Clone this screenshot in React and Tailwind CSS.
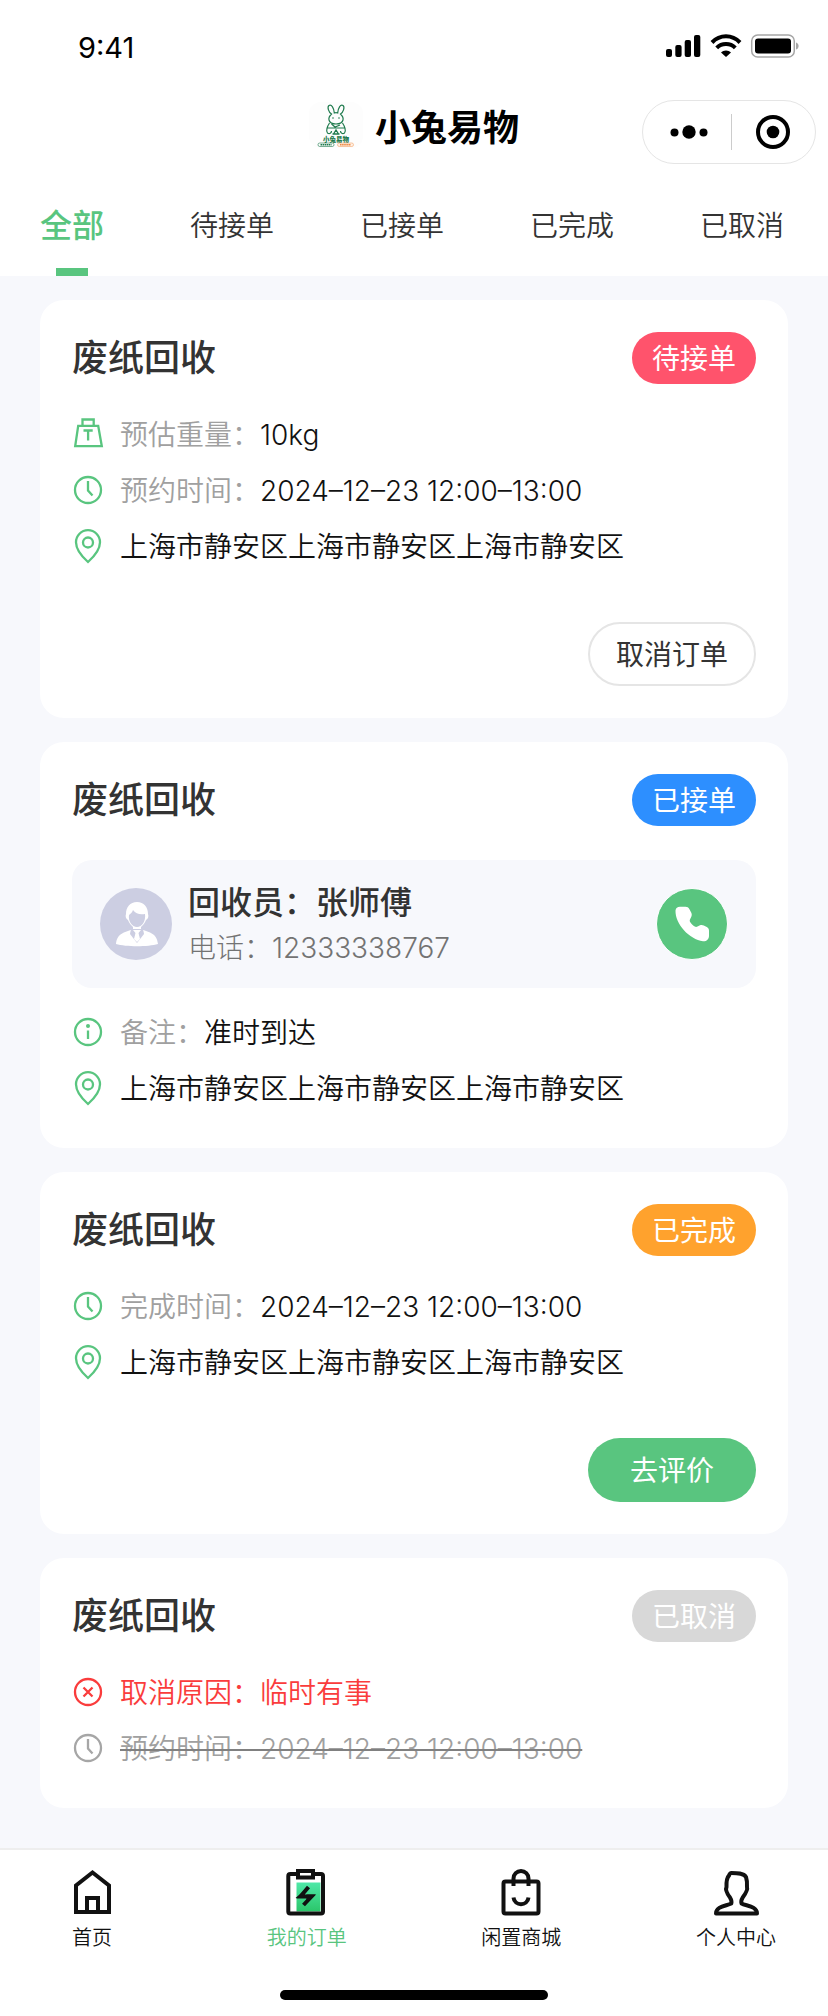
import { useState } from "react";

const tabs = ["全部", "待接单", "已接单", "已完成", "已取消"];

const ADDRESS = "上海市静安区上海市静安区上海市静安区";

const orders = [
    {
        id: 1,
        title: "废纸回收",
        status: "待接单",
        badge: "bg-[#ff536c]",
        rows: [
            { icon: "weight", label: "预估重量：", value: "10kg" },
            { icon: "clock", label: "预约时间：", value: "2024–12–23 12:00–13:00" },
            { icon: "pin", value: ADDRESS },
        ],
        action: "cancel",
    },
    {
        id: 2,
        title: "废纸回收",
        status: "已接单",
        badge: "bg-[#2d8fff]",
        collector: { name: "张师傅", phone: "12333338767" },
        rows: [
            { icon: "info", label: "备注：", value: "准时到达" },
            { icon: "pin", value: ADDRESS },
        ],
    },
    {
        id: 3,
        title: "废纸回收",
        status: "已完成",
        badge: "bg-[#ffa22d]",
        rows: [
            { icon: "clock", label: "完成时间：", value: "2024–12–23 12:00–13:00" },
            { icon: "pin", value: ADDRESS },
        ],
        action: "review",
    },
    {
        id: 4,
        title: "废纸回收",
        status: "已取消",
        badge: "bg-[#d8d8d8]",
        rows: [
            { icon: "close", label: "取消原因：", value: "临时有事", tone: "danger" },
            { icon: "clock", label: "预约时间：", value: "2024–12–23 12:00–13:00", tone: "void" },
        ],
    },
];

const RowIcon = ({ name }) => (
    <svg
        viewBox="0 0 32 36"
        className="w-8 h-9 shrink-0"
        fill="none"
        stroke="currentColor"
        strokeWidth="2.300"
        aria-hidden="true"
    >
        {name === "weight" && (
            <>
                <path d="M6.200 9.800h20l3.600 20.400H3.200z" />
                <path d="M10.500 9.800V3.500h11.200v6.300M11.500 14.500h9.200M16.100 14.500v10" />
            </>
        )}
        {name === "pin" && (
            <>
                <path d="M16 34C11 29.500 4 22.500 4 14.200a12 12 0 0 1 24 0C28 22.500 21 29.500 16 34z" />
                <circle cx="16" cy="14.500" r="5" />
            </>
        )}
        {name !== "weight" && name !== "pin" && <circle cx="16" cy="18" r="13" />}
        {name === "clock" && <path d="M16 9v9.500l4.500 5" />}
        {name === "info" && (
            <>
                <path d="M16 16.500v8.500" />
                <circle cx="16" cy="12" r="2" fill="currentColor" stroke="none" />
            </>
        )}
        {name === "close" && <path d="M11.500 13.500l9 9M20.500 13.500l-9 9" />}
    </svg>
);

const StatusBar = () => (
    <div className="flex items-center justify-between pt-7 pl-[78px] pr-7 h-[68px]">
        <span className="text-[29px] leading-10 text-black">9:41</span>
        <div className="flex items-center gap-2 pb-1">
            <svg viewBox="0 0 36 24" className="w-9 h-6" aria-hidden="true">
                <rect x="0" y="15" width="6" height="8" rx="2" />
                <rect x="9.300" y="11" width="6.300" height="12" rx="2" />
                <rect x="18.700" y="6" width="6.300" height="17" rx="2" />
                <rect x="28" y="1" width="6.300" height="22" rx="2" />
            </svg>
            <svg viewBox="0 0 32 24" className="w-8 h-6" aria-hidden="true">
                <path d="M16 23l-5-4.600c2.400-2.700 7.600-2.700 10 0z" />
                <g fill="none" stroke="#000" strokeWidth="4">
                    <path d="M2 8.500C10 .3 22 .3 30 8.500" />
                    <path d="M6.700 13.800c5-5 13.600-5 18.600 0" />
                </g>
            </svg>
            <svg viewBox="0 0 50 24" className="w-[50px] h-6" aria-hidden="true">
                <rect x="1.700" y="1" width="42.600" height="22" rx="6" fill="none" stroke="#a6a6a6" strokeWidth="1.500" />
                <rect x="5" y="4.500" width="36" height="15" rx="3" />
                <path d="M46 8.500c3.500 1 3.500 6 0 7z" fill="#a6a6a6" />
            </svg>
        </div>
    </div>
);

const Logo = () => (
    <svg viewBox="0 0 54 46" className="w-[54px] h-[46px]" fill="none" stroke="#1f7a4d" role="img" aria-label="小兔易物">
        <rect width="54" height="46" rx="12" fill="#fdfdfd" stroke="none" />
        <path
            strokeWidth="1.200"
            d="M22.500 12c-3-2-4.500-7-2.500-8.500C22.500 2 25 6 25.300 11c1.100-.4 2.300-.4 3.400 0C29 6 31.500 2 34 3.500c2 1.500.5 6.500-2.500 8.500 2 2 3 4 2.500 6-.8 3-3 4-7 4s-6.200-1-7-4c-.5-2 .5-4 2.500-6z"
        />
        <path strokeWidth="1.200" d="M20.500 21c-2 3-4 8-2 10 2 1.500 4 0 4-2M33.500 21c2 3 4 8 2 10-2 1.500-4 0-4-2M18 26h18M22.500 22l3.500 3 5-2" />
        <path strokeWidth="1.300" d="M24.500 32l2.500-4 2.500 4zM23.500 32h7" />
        <circle cx="24" cy="16" r=".8" fill="#1f7a4d" stroke="none" />
        <circle cx="30" cy="16" r=".8" fill="#1f7a4d" stroke="none" />
        <text x="27" y="39.500" textAnchor="middle" fontSize="6.500" fontWeight="900" fill="#1f7a4d" stroke="none">
            小兔易物
        </text>
        <rect x="9" y="41" width="16" height="3.500" rx="1.700" strokeWidth=".6" />
        <path d="M11.500 42.700h11" strokeWidth="1.500" strokeDasharray="1.600 .5" />
        <rect x="28.500" y="41" width="16" height="3.500" rx="1.700" fill="#fff0e4" stroke="#f4a46a" strokeWidth=".6" />
        <path d="M31 42.700h11" stroke="#ee8a45" strokeWidth="1.500" strokeDasharray="1.600 .5" />
    </svg>
);

const NavBar = () => (
    <div className="grid grid-cols-[1fr_auto_1fr] items-center pt-8 px-3">
        <div />
        <div className="flex items-start gap-3 pb-2">
            <Logo />
            <h1 className="text-[36px] leading-[52px] font-semibold text-black">小兔易物</h1>
        </div>
        {/* Mini program capsule */}
        <div className="flex items-center justify-self-end w-[174px] h-16 rounded-full border border-[#e5e5e5]">
            <button className="flex-1 flex justify-center pl-1" aria-label="更多">
                <svg viewBox="0 0 38 14" className="w-[38px] h-[14px]">
                    <circle cx="4.500" cy="7.500" r="4" />
                    <circle cx="19" cy="7" r="6.700" />
                    <circle cx="33.500" cy="7.500" r="4" />
                </svg>
            </button>
            <span className="w-px h-9 bg-[#cccccc]" />
            <button className="flex-1 flex justify-center" aria-label="关闭">
                <svg viewBox="0 0 34 34" className="w-[34px] h-[34px]">
                    <circle cx="17" cy="17" r="15" fill="none" stroke="#000" strokeWidth="4" />
                    <circle cx="17" cy="17" r="6.300" />
                </svg>
            </button>
        </div>
    </div>
);

const OrderTabs = ({ active, onChange }) => (
    <nav className="flex justify-between h-28 pl-10 pr-11">
        {tabs.map((tab) => (
            <button
                key={tab}
                onClick={() => onChange(tab)}
                className={
                    tab === active
                        ? "relative pt-3 text-[32px] leading-[44px] font-medium text-[#59c57f]"
                        : "relative pt-3 text-[28px] leading-[44px] font-[350] text-[#333333]"
                }
            >
                {tab}
                {tab === active && (
                    <span className="absolute bottom-0 left-1/2 -translate-x-1/2 w-8 h-2 bg-[#59c57f]" />
                )}
            </button>
        ))}
    </nav>
);

const CollectorPanel = ({ collector }) => (
    <div className="flex items-center h-32 mt-[34px] px-7 rounded-[20px] bg-[#f7f8fc]">
        <svg viewBox="0 0 72 72" className="w-[72px] h-[72px] shrink-0" aria-hidden="true">
            <circle cx="36" cy="36" r="36" fill="#cccee2" />
            <path
                fill="#fff"
                d="M37 14c7 0 11 5 11 12 1 2 0 5-2 6-1 3-3 5-5 7v2c6 3 16 3 17 15-10 3-32 3-42 0 1-12 11-12 17-15v-2c-2-2-4-4-5-7-2-1-3-4-2-6 0-7 4-12 11-12z"
            />
            <path fill="#cccee2" d="M33 22c3 4 7 5 12 4 1 7-3 13-8 13s-9-6-8-12c1-1 3-2 4-5z" />
            <path fill="#cccee2" d="M31 41h12l1 5-7 9-7-9z" />
            <path fill="#fff" d="M33 42h8l-2.500 3 1.500 6-3 3-3-3 1.500-6z" />
        </svg>
        <div className="flex-1 ml-4 pt-1">
            <p className="text-[32px] leading-[44px] font-medium text-[#333333]">回收员：{collector.name}</p>
            <p className="text-[28px] leading-[46px] font-light text-[#737373]">电话：{collector.phone}</p>
        </div>
        <a
            href={`tel:${collector.phone}`}
            aria-label="拨打电话"
            className="flex items-center justify-center w-[72px] h-[72px] rounded-full border border-white bg-[#59c57f]"
        >
            <svg viewBox="0 0 36 36" className="w-9 h-9" fill="#fff">
                <path d="M1.500 4.500C1.800 2 3.500.8 6 .8h5.500c1.800 0 3 .8 3.800 2.200l2 3.700c.6 1.400.6 2.700 0 4l-1.200 2.500c-.6 1.200-.4 2.200.4 3.300 1.200 1.700 2.500 3 4.300 4 1 .6 1.700.5 2.700 0l2.500-1.200c1.300-.6 2.500-.5 3.800.2l3 1.600c1.500.8 2.200 2 2.200 3.700v5c0 3.500-2.500 5.700-6 5.500C15.500 33.500 1 18 1.500 4.500z" />
            </svg>
        </a>
    </div>
);

const InfoRow = ({ row }) => {
    const danger = row.tone === "danger";
    const isVoid = row.tone === "void";
    const iconColor = danger ? "text-[#fa3c3c]" : isVoid ? "text-[#a6a6a6]" : "text-[#59c57f]";
    const labelColor = danger ? "text-[#fa3c3c]" : "text-[#a0a0a0]";
    const valueColor = danger ? "text-[#fa3c3c]" : isVoid ? "text-[#a0a0a0]" : "text-[#111111]";

    return (
        <div className="flex items-center h-14 gap-4">
            <span className={iconColor}>
                <RowIcon name={row.icon} />
            </span>
            <p
                className={
                    isVoid
                        ? "pt-0.5 text-[28px] leading-10 line-through decoration-2 decoration-[#808080]"
                        : "pt-0.5 text-[28px] leading-10"
                }
            >
                {row.label && <span className={`font-[350] ${labelColor}`}>{row.label}</span>}
                <span className={`font-[350] ${valueColor}`}>{row.value}</span>
            </p>
        </div>
    );
};

const OrderCard = ({ order }) => (
    <article className="p-8 rounded-3xl bg-white">
        <header className="flex items-center justify-between">
            <h2 className="text-[36px] leading-[52px] font-medium text-[#333333]">{order.title}</h2>
            <span className={`flex items-center px-5 pt-0.5 h-[52px] rounded-full text-[28px] leading-10 text-white ${order.badge}`}>
                {order.status}
            </span>
        </header>

        {order.collector && <CollectorPanel collector={order.collector} />}

        <div className={order.collector ? "mt-4" : "mt-[22px]"}>
            {order.rows.map((row, i) => (
                <InfoRow key={i} row={row} />
            ))}
        </div>

        {order.action && (
            <div className="flex justify-end mt-12">
                {order.action === "cancel" ? (
                    <button className="w-[168px] h-16 pt-0.5 rounded-full border-2 border-[#e5e5e5] text-[28px] leading-10 text-[#333333]">
                        取消订单
                    </button>
                ) : (
                    <button className="w-[168px] h-16 pt-0.5 rounded-full bg-[#59c57f] text-[28px] leading-10 text-white">
                        去评价
                    </button>
                )}
            </div>
        )}
    </article>
);

const HomeIcon = () => (
    <svg viewBox="0 0 48 48" className="w-12 h-12" fill="none" stroke="#111" strokeWidth="4">
        <path d="M8 44V17.500L24.500 4.500 41 17.500V44z" />
        <path d="M19 44V30h11v14" />
    </svg>
);

const OrderIcon = () => (
    <svg viewBox="1 0 48 48" className="w-12 h-12" fill="none" stroke="#111" strokeWidth="4">
        <defs>
            <linearGradient id="clip-fill" x1="0" y1="0" x2="0" y2="1">
                <stop offset="0" stopColor="#4fe8a8" />
                <stop offset="1" stopColor="#2bc66a" />
            </linearGradient>
        </defs>
        <rect x="14.500" y="14.500" width="24" height="29" fill="url(#clip-fill)" stroke="none" />
        <rect x="6.300" y="6" width="34.700" height="39.500" rx="2" />
        <rect x="16" y="3" width="15" height="6.500" fill="#fff" />
        <path d="M26.500 19l-8 9.500h11l-8 8.500" />
        <path d="M13.500 30l9-7.500V30zM33.500 26.500l-9 8v-8z" fill="#111" stroke="none" />
    </svg>
);

const ShopIcon = () => (
    <svg viewBox="0 0 48 48" className="w-12 h-12" fill="none" stroke="#111" strokeWidth="4">
        <rect x="6.500" y="13.500" width="35" height="32" rx="2" />
        <path d="M16.500 18v-7.500a7.500 7.500 0 0 1 15 0V18" />
        <path d="M16.500 29.500c1 9 14 9 15 0" />
    </svg>
);

const UserIcon = () => (
    <svg viewBox="0 0 48 48" className="w-12 h-12" fill="none" stroke="#111" strokeWidth="4" strokeLinejoin="round">
        <path d="M19.500 5c-1.500 0-2 1-2.500 2.500-2.500 2.500-2.700 6-2.500 11.500-1.500 3 .5 6.500 3.500 10.500 1.500 2.500 2 3.500 1.300 6C14.500 38 4 38 4 45.500h41c0-7.500-11-7.500-15.500-10-.8-2.500-.3-3.500 1.200-6 3-4 5.300-7.500 4.300-10.500.2-4 .2-6.500-1-10C31.500 5 25 5 19.500 5z" />
    </svg>
);

const navItems = [
    { label: "首页", Icon: HomeIcon },
    { label: "我的订单", Icon: OrderIcon, active: true },
    { label: "闲置商城", Icon: ShopIcon },
    { label: "个人中心", Icon: UserIcon },
];

const BottomNav = () => (
    <footer className="mt-10 border-t-2 border-[#eeeeee] bg-white">
        <nav className="flex justify-between px-8 pt-[18px]">
            {navItems.map(({ label, Icon, active }) => (
                <a key={label} href="#" className="flex flex-col items-center w-[120px]">
                    <Icon />
                    <span
                        className={
                            active
                                ? "mt-2 text-[20px] leading-7 font-[350] text-[#59c57f]"
                                : "mt-2 text-[20px] leading-7 font-[350] text-[#111111]"
                        }
                    >
                        {label}
                    </span>
                </a>
            ))}
        </nav>
        {/* Home indicator */}
        <div className="w-[268px] h-[10px] mx-auto mt-[38px] mb-4 rounded-full bg-black" />
    </footer>
);

const App = () => {
    const [activeTab, setActiveTab] = useState("全部");
    const visible = activeTab === "全部" ? orders : orders.filter((o) => o.status === activeTab);

    return (
        <div className="min-h-screen flex flex-col bg-[#f7f8fc] font-[Inter,'Noto_Sans_CJK_SC',sans-serif]">
            <div className="bg-white">
                <StatusBar />
                <NavBar />
                <OrderTabs active={activeTab} onChange={setActiveTab} />
            </div>
            <main className="flex-1 flex flex-col gap-6 px-10 pt-6">
                {visible.map((order) => (
                    <OrderCard key={order.id} order={order} />
                ))}
            </main>
            <BottomNav />
        </div>
    );
};

export default App;
